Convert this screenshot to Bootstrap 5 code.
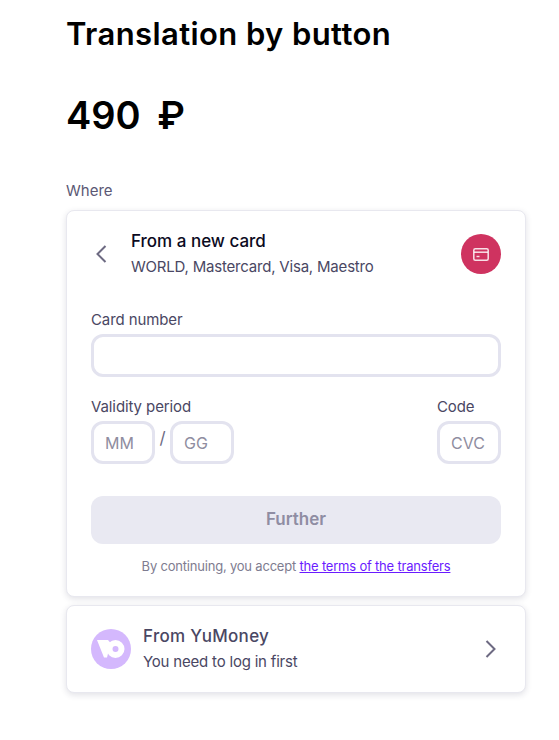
<!doctype html>
<html lang="en"><head><meta charset="utf-8"><title>Translation by button</title>
<link href="https://cdn.jsdelivr.net/npm/bootstrap@5.3.0/dist/css/bootstrap.min.css" rel="stylesheet">
<style>
html,body{background:#fff}
body{font-family:Inter,"Noto Sans",sans-serif;color:#4a4763;width:559px;height:740px;overflow:hidden}
.pagewrap{padding:0 33px 0 66px}
.ttl{font-size:31px;line-height:36px;font-weight:600;color:#000;margin:16px 0 0;letter-spacing:.4px}
.price{font-size:38px;line-height:48px;font-weight:600;color:#000;margin:39px 0 0;word-spacing:7px}
.whr{font-size:15px;line-height:20px;margin:42px 0 9px;color:#5b5874}
.paycard{background:#fff;border:1px solid #e8e8ef;border-radius:8px;box-shadow:0 2px 6px rgba(40,40,80,.14)}
.cardmain{height:387px;padding:14px 24px 0}
.cardalt{height:88px;margin-top:8px;padding:0 24px}
.hd{height:58px}
.chev{width:22px;flex:none;margin-right:18px}
.t1{font-size:17px;line-height:24px;font-weight:500;color:#0b0a1e;margin-bottom:4px;margin-top:-3px}
.t1b{color:#4a4763;letter-spacing:.3px}
.t2{font-size:15px;line-height:20px;color:#4a4763;letter-spacing:-.2px}
.circ{width:40px;height:40px;border-radius:50%;flex:none}
.cr{background:#cf3360}.cp{background:#d4b8fd;margin-right:12px}
.lbl{font-size:15px;line-height:20px;color:#4a4763;margin-bottom:4px;letter-spacing:-.1px}
.lblfirst{margin-top:27px}
.fld{border:3px solid #e3e3ef;border-radius:12px;height:43px;background:#fff;font-size:16px;color:#8f8da0;padding:0 0 0 11px;display:flex;align-items:center}
.mm{width:64px}
.slash{width:15px;text-align:center;color:#6d6a82;font-size:17px;margin-top:-8px}
.periodrow{margin-top:20px}
.go{height:48px;background:#e9e9f2;border:0;border-radius:12px;color:#8f8da3;font-weight:600;font-size:17px;margin-top:32px}
.go:disabled{background:#e9e9f2;color:#8f8da3;opacity:1;border:0}
.note{font-size:13px;line-height:18px;color:#7e7c90;margin-top:13px;letter-spacing:-.2px}
.note a{color:#6a1bff}
</style></head><body>
<div class="pagewrap">
<h1 class="ttl">Translation by button</h1>
<div class="price">490 ₽</div>
<div class="whr">Where</div>
<div class="paycard cardmain">
 <div class="hd d-flex align-items-center">
  <svg class="chev" height="22" viewBox="0 0 22 22" fill="none" stroke="#6d6a82" stroke-width="2"><path d="M14.5 3 6.5 11l8 8"/></svg>
  <div class="flex-grow-1"><div class="t1">From a new card</div><div class="t2">WORLD, Mastercard, Visa, Maestro</div></div>
  <div class="circ cr d-flex align-items-center justify-content-center">
   <svg width="16" height="13" viewBox="0 0 16 13" fill="none"><rect x=".8" y=".8" width="14.4" height="11.4" rx="1.5" stroke="#fff" stroke-opacity=".85" stroke-width="1.5"/><path d="M1 4.2h14" stroke="#fff" stroke-opacity=".85" stroke-width="1.5"/><path d="M3.5 8.5h3" stroke="#fff" stroke-opacity=".85" stroke-width="1.4"/></svg>
  </div>
 </div>
 <div class="lbl lblfirst">Card number</div>
 <div class="fld"></div>
 <div class="periodrow d-flex justify-content-between">
  <div><div class="lbl">Validity period</div>
   <div class="d-flex align-items-center"><div class="fld mm">MM</div><div class="slash">/</div><div class="fld mm">GG</div></div></div>
  <div><div class="lbl">Code</div><div class="fld mm">CVC</div></div>
 </div>
 <button class="go btn w-100" disabled>Further</button>
 <div class="note text-center">By continuing, you accept <a href="#">the terms of the transfers</a></div>
</div>
<div class="paycard cardalt d-flex align-items-center">
 <div class="circ cp d-flex align-items-center justify-content-center">
  <svg width="28" height="18" viewBox="0 0 28 18"><path d="M0 0h11l2.5 3L10 17.5H7z" fill="#fff"/><path fill-rule="evenodd" d="M18.5 0a9 9 0 1 1 0 18 9 9 0 0 1 0-18zm0 6a3 3 0 1 0 0 6 3 3 0 0 0 0-6z" fill="#fff"/></svg>
 </div>
 <div class="flex-grow-1"><div class="t1 t1b">From YuMoney</div><div class="t2">You need to log in first</div></div>
 <svg width="22" height="22" viewBox="0 0 22 22" fill="none" stroke="#6d6a82" stroke-width="2"><path d="m7.5 3 8 8-8 8"/></svg>
</div>
</div>
</body></html>
